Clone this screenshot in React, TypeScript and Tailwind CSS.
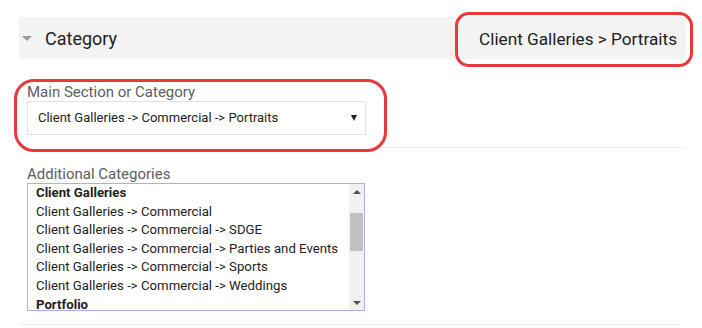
const extraCategories = [
  { label: "Client Galleries", bold: true },
  { label: "Client Galleries -> Commercial" },
  { label: "Client Galleries -> Commercial -> SDGE" },
  { label: "Client Galleries -> Commercial -> Parties and Events" },
  { label: "Client Galleries -> Commercial -> Sports" },
  { label: "Client Galleries -> Commercial -> Weddings" },
  { label: "Portfolio", bold: true },
];

function CaretDown({ className }: { className?: string }) {
  return (
    <svg viewBox="0 0 12 6" className={className} fill="currentColor">
      <path d="M0 0h12L6 6z" />
    </svg>
  );
}

export default function App() {
  return (
    <div className="h-[328px] w-[702px] overflow-hidden bg-white font-['Roboto',sans-serif]">
      <div className="ml-[19px] w-[667px] pt-[17px]">
        {/* Collapsible header */}
        <div className="relative flex h-[42px] items-center bg-[#f3f3f3]">
          <CaretDown className="ml-[2px] h-[5px] w-[12px] text-[#9a9a9a]" />
          <span className="ml-[12px] text-[18px] text-[#222]">Category</span>
          <span className="ml-auto mr-[9px] mt-[3px] text-[17.2px] text-[#222]">Client Galleries &gt; Portraits</span>
          <div className="pointer-events-none absolute left-[436px] top-[-5px] h-[55px] w-[238px] rounded-[14px] border-[3px] border-[#e8383d]" />
        </div>

        {/* Main section */}
        <div className="relative mt-[24px] pl-[8px]">
          <div className="text-[15px] leading-[18px] text-[#606060]">Main Section or Category</div>
          <div className="flex h-[34px] w-[339px] items-center border border-[#e2e2e2] bg-white pl-[10px] pr-[8px] text-[13px] text-[#222]">
            <span>Client Galleries -&gt; Commercial -&gt; Portraits</span>
            <svg viewBox="0 0 6 6" className="ml-auto h-[6px] w-[6px] text-[#222]" fill="currentColor">
              <path d="M0 0h6L3 6z" />
            </svg>
          </div>
          <div className="pointer-events-none absolute left-[-5px] top-[-4px] h-[73px] w-[373px] rounded-[20px] border-[3px] border-[#e8383d]" />
        </div>

        <div className="ml-[358px] mt-[12px] h-px bg-[#eeeeee]" />

        {/* Additional categories */}
        <div className="mt-[17px] pl-[8px]">
          <div className="text-[15px] leading-[18px] text-[#606060]">Additional Categories</div>
          <div className="flex h-[128px] w-[338px] border border-[#a3b3ea] bg-white">
            <div className="flex-1 overflow-hidden pl-[8px]">
              {extraCategories.map((c) => (
                <div
                  key={c.label}
                  className={`text-[13.2px] leading-[18.6px] text-[#222] ${c.bold ? "font-bold" : ""}`}
                >
                  {c.label}
                </div>
              ))}
            </div>
            <div className="flex w-[15px] flex-col bg-[#f1f1f1]">
              <div className="flex h-[15px] items-center justify-center">
                <svg viewBox="0 0 8 4" className="h-[4px] w-[8px] text-[#505050]" fill="currentColor">
                  <path d="M0 4h8L4 0z" />
                </svg>
              </div>
              <div className="mx-[1px] mt-[14px] h-[38px] bg-[#c1c1c1]" />
              <div className="mt-auto flex h-[15px] items-center justify-center">
                <CaretDown className="h-[4px] w-[8px] text-[#505050]" />
              </div>
            </div>
          </div>
        </div>

        <div className="mt-[13px] h-px w-[661px] bg-[#eeeeee]" />
      </div>
    </div>
  );
}
